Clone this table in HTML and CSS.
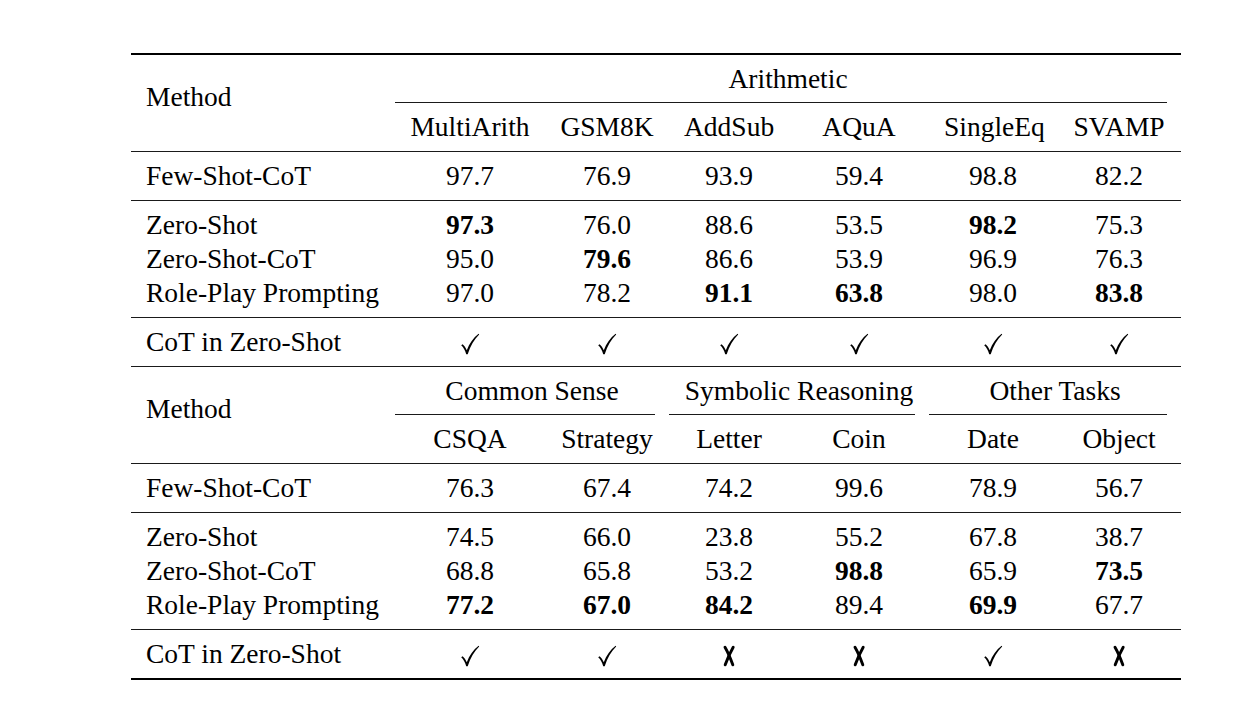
FILE: index.html
```html
<!DOCTYPE html>
<html>
<head>
<meta charset="utf-8">
<link rel="stylesheet" href="styles.css">
</head>
<body>
<div class="page">
<table class="results">
  <colgroup>
    <col class="c-method"><col class="c-2"><col class="c-3"><col class="c-4"><col class="c-5"><col class="c-6"><col class="c-7">
  </colgroup>
  <tbody class="head">
    <tr>
      <th rowspan="2" class="method">Method</th>
      <th colspan="6" class="group"><div class="group-label"><span class="group-text">Arithmetic</span></div></th>
    </tr>
    <tr class="sub">
      <th>MultiArith</th><th>GSM8K</th><th>AddSub</th><th>AQuA</th><th>SingleEq</th><th>SVAMP</th>
    </tr>
  </tbody>
  <tbody class="single">
    <tr><td class="name">Few-Shot-CoT</td><td>97.7</td><td>76.9</td><td>93.9</td><td>59.4</td><td>98.8</td><td>82.2</td></tr>
  </tbody>
  <tbody class="grouped">
    <tr><td class="name">Zero-Shot</td><td class="b">97.3</td><td>76.0</td><td>88.6</td><td>53.5</td><td class="b">98.2</td><td>75.3</td></tr>
    <tr><td class="name">Zero-Shot-CoT</td><td>95.0</td><td class="b">79.6</td><td>86.6</td><td>53.9</td><td>96.9</td><td>76.3</td></tr>
    <tr><td class="name">Role-Play Prompting</td><td>97.0</td><td>78.2</td><td class="b">91.1</td><td class="b">63.8</td><td>98.0</td><td class="b">83.8</td></tr>
  </tbody>
  <tbody class="single">
    <tr>
      <td class="name">CoT in Zero-Shot</td>
      <td><svg class="ck" viewBox="0 0 20 22"><path d="M1.2 12.2 L2.6 11.2 C4.3 12.6 5.6 14.6 6.8 17.2 C9.4 10.6 13.3 4.8 18.6 0.8 L19.2 1.4 C14.2 6.2 10.4 12.6 7.7 21.2 L6.2 21.2 C5.2 17.4 3.6 14.4 1.2 12.2 Z"/></svg></td>
      <td><svg class="ck" viewBox="0 0 20 22"><path d="M1.2 12.2 L2.6 11.2 C4.3 12.6 5.6 14.6 6.8 17.2 C9.4 10.6 13.3 4.8 18.6 0.8 L19.2 1.4 C14.2 6.2 10.4 12.6 7.7 21.2 L6.2 21.2 C5.2 17.4 3.6 14.4 1.2 12.2 Z"/></svg></td>
      <td><svg class="ck" viewBox="0 0 20 22"><path d="M1.2 12.2 L2.6 11.2 C4.3 12.6 5.6 14.6 6.8 17.2 C9.4 10.6 13.3 4.8 18.6 0.8 L19.2 1.4 C14.2 6.2 10.4 12.6 7.7 21.2 L6.2 21.2 C5.2 17.4 3.6 14.4 1.2 12.2 Z"/></svg></td>
      <td><svg class="ck" viewBox="0 0 20 22"><path d="M1.2 12.2 L2.6 11.2 C4.3 12.6 5.6 14.6 6.8 17.2 C9.4 10.6 13.3 4.8 18.6 0.8 L19.2 1.4 C14.2 6.2 10.4 12.6 7.7 21.2 L6.2 21.2 C5.2 17.4 3.6 14.4 1.2 12.2 Z"/></svg></td>
      <td><svg class="ck" viewBox="0 0 20 22"><path d="M1.2 12.2 L2.6 11.2 C4.3 12.6 5.6 14.6 6.8 17.2 C9.4 10.6 13.3 4.8 18.6 0.8 L19.2 1.4 C14.2 6.2 10.4 12.6 7.7 21.2 L6.2 21.2 C5.2 17.4 3.6 14.4 1.2 12.2 Z"/></svg></td>
      <td><svg class="ck" viewBox="0 0 20 22"><path d="M1.2 12.2 L2.6 11.2 C4.3 12.6 5.6 14.6 6.8 17.2 C9.4 10.6 13.3 4.8 18.6 0.8 L19.2 1.4 C14.2 6.2 10.4 12.6 7.7 21.2 L6.2 21.2 C5.2 17.4 3.6 14.4 1.2 12.2 Z"/></svg></td>
    </tr>
  </tbody>
  <tbody class="head second">
    <tr>
      <th rowspan="2" class="method">Method</th>
      <th colspan="2" class="group"><div class="group-label"><span class="group-text">Common Sense</span></div></th>
      <th colspan="2" class="group"><div class="group-label"><span class="group-text">Symbolic Reasoning</span></div></th>
      <th colspan="2" class="group"><div class="group-label"><span class="group-text">Other Tasks</span></div></th>
    </tr>
    <tr class="sub">
      <th>CSQA</th><th>Strategy</th><th>Letter</th><th>Coin</th><th>Date</th><th>Object</th>
    </tr>
  </tbody>
  <tbody class="single">
    <tr><td class="name">Few-Shot-CoT</td><td>76.3</td><td>67.4</td><td>74.2</td><td>99.6</td><td>78.9</td><td>56.7</td></tr>
  </tbody>
  <tbody class="grouped">
    <tr><td class="name">Zero-Shot</td><td>74.5</td><td>66.0</td><td>23.8</td><td>55.2</td><td>67.8</td><td>38.7</td></tr>
    <tr><td class="name">Zero-Shot-CoT</td><td>68.8</td><td>65.8</td><td>53.2</td><td class="b">98.8</td><td>65.9</td><td class="b">73.5</td></tr>
    <tr><td class="name">Role-Play Prompting</td><td class="b">77.2</td><td class="b">67.0</td><td class="b">84.2</td><td>89.4</td><td class="b">69.9</td><td>67.7</td></tr>
  </tbody>
  <tbody class="single last">
    <tr>
      <td class="name">CoT in Zero-Shot</td>
      <td><svg class="ck" viewBox="0 0 20 22"><path d="M1.2 12.2 L2.6 11.2 C4.3 12.6 5.6 14.6 6.8 17.2 C9.4 10.6 13.3 4.8 18.6 0.8 L19.2 1.4 C14.2 6.2 10.4 12.6 7.7 21.2 L6.2 21.2 C5.2 17.4 3.6 14.4 1.2 12.2 Z"/></svg></td>
      <td><svg class="ck" viewBox="0 0 20 22"><path d="M1.2 12.2 L2.6 11.2 C4.3 12.6 5.6 14.6 6.8 17.2 C9.4 10.6 13.3 4.8 18.6 0.8 L19.2 1.4 C14.2 6.2 10.4 12.6 7.7 21.2 L6.2 21.2 C5.2 17.4 3.6 14.4 1.2 12.2 Z"/></svg></td>
      <td><svg class="xm" viewBox="0 0 14 22"><path d="M3 2.2 C5.5 6.5 8.2 12.5 10.8 19.8"/><path d="M11.2 2.2 C8.2 7.5 5.6 13 3.2 19.8"/></svg></td>
      <td><svg class="xm" viewBox="0 0 14 22"><path d="M3 2.2 C5.5 6.5 8.2 12.5 10.8 19.8"/><path d="M11.2 2.2 C8.2 7.5 5.6 13 3.2 19.8"/></svg></td>
      <td><svg class="ck" viewBox="0 0 20 22"><path d="M1.2 12.2 L2.6 11.2 C4.3 12.6 5.6 14.6 6.8 17.2 C9.4 10.6 13.3 4.8 18.6 0.8 L19.2 1.4 C14.2 6.2 10.4 12.6 7.7 21.2 L6.2 21.2 C5.2 17.4 3.6 14.4 1.2 12.2 Z"/></svg></td>
      <td><svg class="xm" viewBox="0 0 14 22"><path d="M3 2.2 C5.5 6.5 8.2 12.5 10.8 19.8"/><path d="M11.2 2.2 C8.2 7.5 5.6 13 3.2 19.8"/></svg></td>
    </tr>
  </tbody>
</table>
</div>
</body>
</html>
```

FILE: styles.css
```css
html, body {
  margin: 0;
  background: #ffffff;
}

.page {
  padding: 53px 0 0 131px;
}

.results {
  border-collapse: collapse;
  table-layout: fixed;
  width: 1050px;
  font-family: "Liberation Serif", "Times New Roman", serif;
  font-size: 27.5px;
  line-height: 34px;
  color: #000;
  border-top: 2px solid #000;
  border-bottom: 2px solid #000;
}

.c-method { width: 264px; }
.c-2 { width: 150px; }
.c-3 { width: 124px; }
.c-4 { width: 120px; }
.c-5 { width: 140px; }
.c-6 { width: 128px; }
.c-7 { width: 124px; }

.results th,
.results td {
  font-family: "Liberation Serif", "Times New Roman", serif;
  font-weight: normal;
  text-align: center;
  white-space: nowrap;
  padding: 7px 15px;
  vertical-align: middle;
}

.results .name,
.results .method {
  text-align: left;
}

.results .method {
  padding: 0 15px 12px 15px;
}

.results th.group {
  padding: 0;
}

.group-label {
  padding: 7px 0 6px 0;
  margin-right: 14px;
  border-bottom: 1px solid #1a1a1a;
}

.group-text {
  display: block;
  margin-right: -14px;
  text-align: center;
}

tbody.single,
tbody.grouped,
tbody.second {
  border-top: 1px solid #1a1a1a;
}

tbody.grouped td {
  padding-top: 0;
  padding-bottom: 0;
}

tbody.grouped tr:first-child td {
  padding-top: 7px;
}

tbody.grouped tr:last-child td {
  padding-bottom: 7px;
}

.results td.b {
  font-weight: bold;
}

.ck {
  width: 20px;
  height: 22px;
  display: inline-block;
  vertical-align: -4px;
  fill: #000;
}

.xm {
  width: 14px;
  height: 22px;
  display: inline-block;
  vertical-align: -4px;
  fill: none;
  stroke: #000;
  stroke-width: 2.9;
  stroke-linecap: round;
}
```
